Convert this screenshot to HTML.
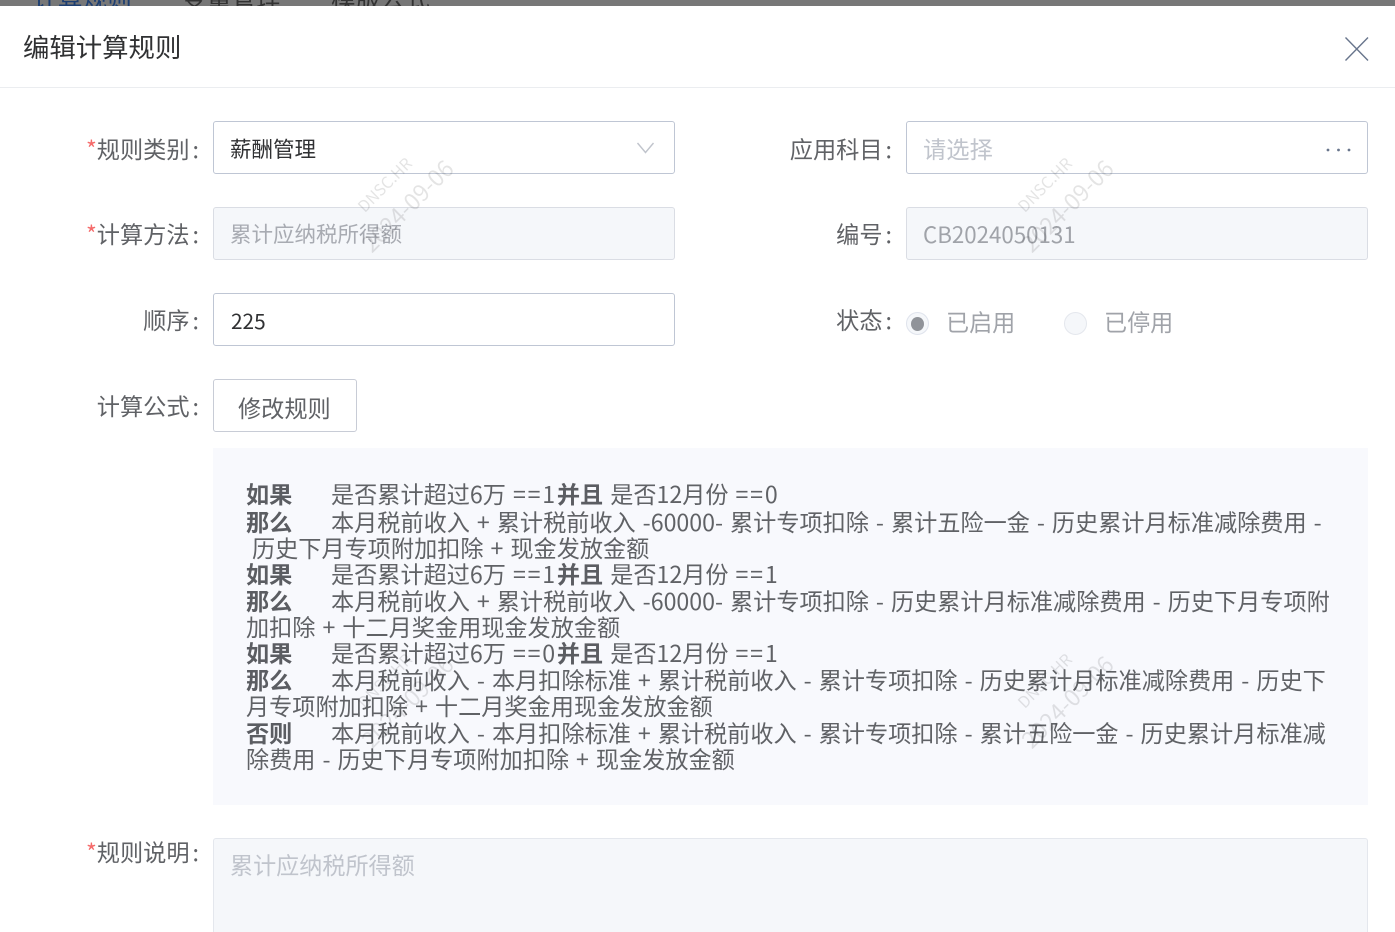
<!DOCTYPE html>
<html lang="zh">
<head>
<meta charset="utf-8">
<style>
html,body{margin:0;padding:0;width:1395px;height:932px;overflow:hidden;background:#fff}
body{position:relative;font-family:"Noto Sans CJK SC",sans-serif;color:#606266}
.a{position:absolute;white-space:nowrap}
.box{position:absolute;box-sizing:border-box;border:1px solid #bfc6d4;border-radius:3px;background:#fff;width:462px;height:53px}
.dis{background:#f5f7fa;border-color:#dadde4}
.lbl{position:absolute;right:1196px;font-size:23.200px;line-height:30px;white-space:nowrap;color:#606266}
.lbl2{right:503px}
.lbl i{font-style:normal;color:#f56c6c}
.lbl u{text-decoration:none;margin-left:3px}
.t{position:absolute;white-space:pre;font-size:23.170px;line-height:26.300px;color:#606266;word-spacing:1.800px}
.t b{color:#5b5d62}
.t span{letter-spacing:1.800px}
.wm{position:absolute;transform:rotate(-45deg);transform-origin:center;color:#000;opacity:.1;white-space:nowrap;text-align:center}
</style>
</head>
<body>
<div class="a" style="left:0;top:0;width:1395px;height:6px;background:#777"></div>
<div class="a" style="left:33px;top:-17px;font-size:24.700px;line-height:30px;color:#1d3f72;height:23px;overflow:hidden">计算规则</div>
<div class="a" style="left:182px;top:-17px;font-size:24.700px;line-height:30px;color:#333;height:23px;overflow:hidden">变量管理</div>
<div class="a" style="left:331px;top:-17px;font-size:24.700px;line-height:30px;color:#333;height:23px;overflow:hidden">模版公式</div>

<div class="a" style="left:23px;top:28px;font-size:26.400px;line-height:36px;color:#303133">编辑计算规则</div>
<svg class="a" style="left:1343px;top:36px" width="28" height="26" viewBox="0 0 28 26"><path d="M2.500 1.500 25 24.500M25 1.500 2.500 24.500" stroke="#68758c" stroke-width="1.400" fill="none"/></svg>
<div class="a" style="left:0;top:87px;width:1395px;height:1px;background:#ebedf0"></div>

<!-- row 1 -->
<div class="lbl" style="top:133px"><i>*</i>规则类别<u>:</u></div>
<div class="box" style="left:213px;top:121px"></div>
<div class="a" style="left:230px;top:134px;font-size:21.500px;line-height:30px;color:#303133">薪酬管理</div>
<svg class="a" style="left:636px;top:141px" width="20" height="14" viewBox="0 0 20 14"><path d="M1.500 2 9.500 11.500 17.500 2" stroke="#c0c4cc" stroke-width="1.400" fill="none"/></svg>
<div class="lbl lbl2" style="top:133px">应用科目<u>:</u></div>
<div class="box" style="left:906px;top:121px"></div>
<div class="a" style="left:923px;top:133px;font-size:23.300px;line-height:30px;color:#c0c4cc">请选择</div>
<svg class="a" style="left:1325px;top:146px" width="28" height="8" viewBox="0 0 28 8"><circle cx="3" cy="4" r="1.400" fill="#68758c"/><circle cx="13.500" cy="4" r="1.400" fill="#68758c"/><circle cx="24" cy="4" r="1.400" fill="#68758c"/></svg>

<!-- row 2 -->
<div class="lbl" style="top:218px"><i>*</i>计算方法<u>:</u></div>
<div class="box dis" style="left:213px;top:207px"></div>
<div class="a" style="left:230px;top:219px;font-size:21.500px;line-height:30px;color:#a8abb2">累计应纳税所得额</div>
<div class="lbl lbl2" style="top:218px">编号<u>:</u></div>
<div class="box dis" style="left:906px;top:207px"></div>
<div class="a" style="left:923px;top:219px;font-size:22.300px;line-height:30px;color:#a0a3a9">CB2024050131</div>

<!-- row 3 -->
<div class="lbl" style="top:304px">顺序<u>:</u></div>
<div class="box" style="left:213px;top:293px"></div>
<div class="a" style="left:231px;top:305px;font-size:20.800px;line-height:30px;color:#303133">225</div>
<div class="lbl lbl2" style="top:304px">状态<u>:</u></div>
<div class="a" style="left:906px;top:312px;box-sizing:border-box;width:23px;height:23px;border:1px solid #dfe3ec;border-radius:50%;background:#f5f7fa"></div>
<div class="a" style="left:911px;top:316.500px;width:13px;height:14px;border-radius:50%;background:#909399"></div>
<div class="a" style="left:946px;top:306px;font-size:23.100px;line-height:30px;color:#a0a3a9">已启用</div>
<div class="a" style="left:1064px;top:312px;box-sizing:border-box;width:23px;height:23px;border:1px solid #e4e7ed;border-radius:50%;background:#f5f7fa"></div>
<div class="a" style="left:1104px;top:306px;font-size:23.100px;line-height:30px;color:#a0a3a9">已停用</div>

<!-- row 4 -->
<div class="lbl" style="top:390px">计算公式<u>:</u></div>
<div class="box" style="left:213px;top:379px;width:144px;border-color:#c8ccd6"></div>
<div class="a" style="left:238px;top:392px;font-size:23.200px;line-height:30px;color:#606266">修改规则</div>

<!-- formula -->
<div class="a" style="left:213px;top:448px;width:1155px;height:357px;background:#f8f9fd"></div>
<div class="t" style="left:246px;top:480px"><b>如果</b></div><div class="t" style="left:331px;top:480px">是否累计超过6万 <span>==1</span><b>并且</b> 是否12月份 <span>==0</span></div>
<div class="t" style="left:246px;top:508px"><b>那么</b></div><div class="t" style="left:331px;top:508px">本月税前收入 + 累计税前收入 -60000- 累计专项扣除 - 累计五险一金 - 历史累计月标准减除费用 -</div>
<div class="t" style="left:252px;top:534px">历史下月专项附加扣除 + 现金发放金额</div>
<div class="t" style="left:246px;top:560px"><b>如果</b></div><div class="t" style="left:331px;top:560px">是否累计超过6万 <span>==1</span><b>并且</b> 是否12月份 <span>==1</span></div>
<div class="t" style="left:246px;top:587px"><b>那么</b></div><div class="t" style="left:331px;top:587px">本月税前收入 + 累计税前收入 -60000- 累计专项扣除 - 历史累计月标准减除费用 - 历史下月专项附</div>
<div class="t" style="left:246px;top:613px">加扣除 + 十二月奖金用现金发放金额</div>
<div class="t" style="left:246px;top:639px"><b>如果</b></div><div class="t" style="left:331px;top:639px">是否累计超过6万 <span>==0</span><b>并且</b> 是否12月份 <span>==1</span></div>
<div class="t" style="left:246px;top:666px"><b>那么</b></div><div class="t" style="left:331px;top:666px">本月税前收入 - 本月扣除标准 + 累计税前收入 - 累计专项扣除 - 历史累计月标准减除费用 - 历史下</div>
<div class="t" style="left:246px;top:692px">月专项附加扣除 + 十二月奖金用现金发放金额</div>
<div class="t" style="left:246px;top:719px"><b>否则</b></div><div class="t" style="left:331px;top:719px">本月税前收入 - 本月扣除标准 + 累计税前收入 - 累计专项扣除 - 累计五险一金 - 历史累计月标准减</div>
<div class="t" style="left:246px;top:745px">除费用 - 历史下月专项附加扣除 + 现金发放金额</div>

<!-- description -->
<div class="lbl" style="top:836px"><i>*</i>规则说明<u>:</u></div>
<div class="a" style="left:213px;top:838px;box-sizing:border-box;width:1155px;height:110px;background:#f5f7fa;border:1px solid #e4e7ed;border-radius:3px"></div>
<div class="a" style="left:230px;top:849px;font-size:23.100px;line-height:30px;color:#c0c4cc">累计应纳税所得额</div>

<!-- watermarks -->
<div class="wm" style="left:334px;top:175px;width:100px;font-size:16px;line-height:18px">DNSC.HR</div>
<div class="wm" style="left:344px;top:192px;width:125px;font-size:23px;line-height:26px">2024-09-06</div>
<div class="wm" style="left:994px;top:175px;width:100px;font-size:16px;line-height:18px">DNSC.HR</div>
<div class="wm" style="left:1004px;top:192px;width:125px;font-size:23px;line-height:26px">2024-09-06</div>
<div class="wm" style="left:334px;top:671px;width:100px;font-size:16px;line-height:18px">DNSC.HR</div>
<div class="wm" style="left:344px;top:688px;width:125px;font-size:23px;line-height:26px">2024-09-06</div>
<div class="wm" style="left:994px;top:671px;width:100px;font-size:16px;line-height:18px">DNSC.HR</div>
<div class="wm" style="left:1004px;top:688px;width:125px;font-size:23px;line-height:26px">2024-09-06</div>
</body>
</html>
